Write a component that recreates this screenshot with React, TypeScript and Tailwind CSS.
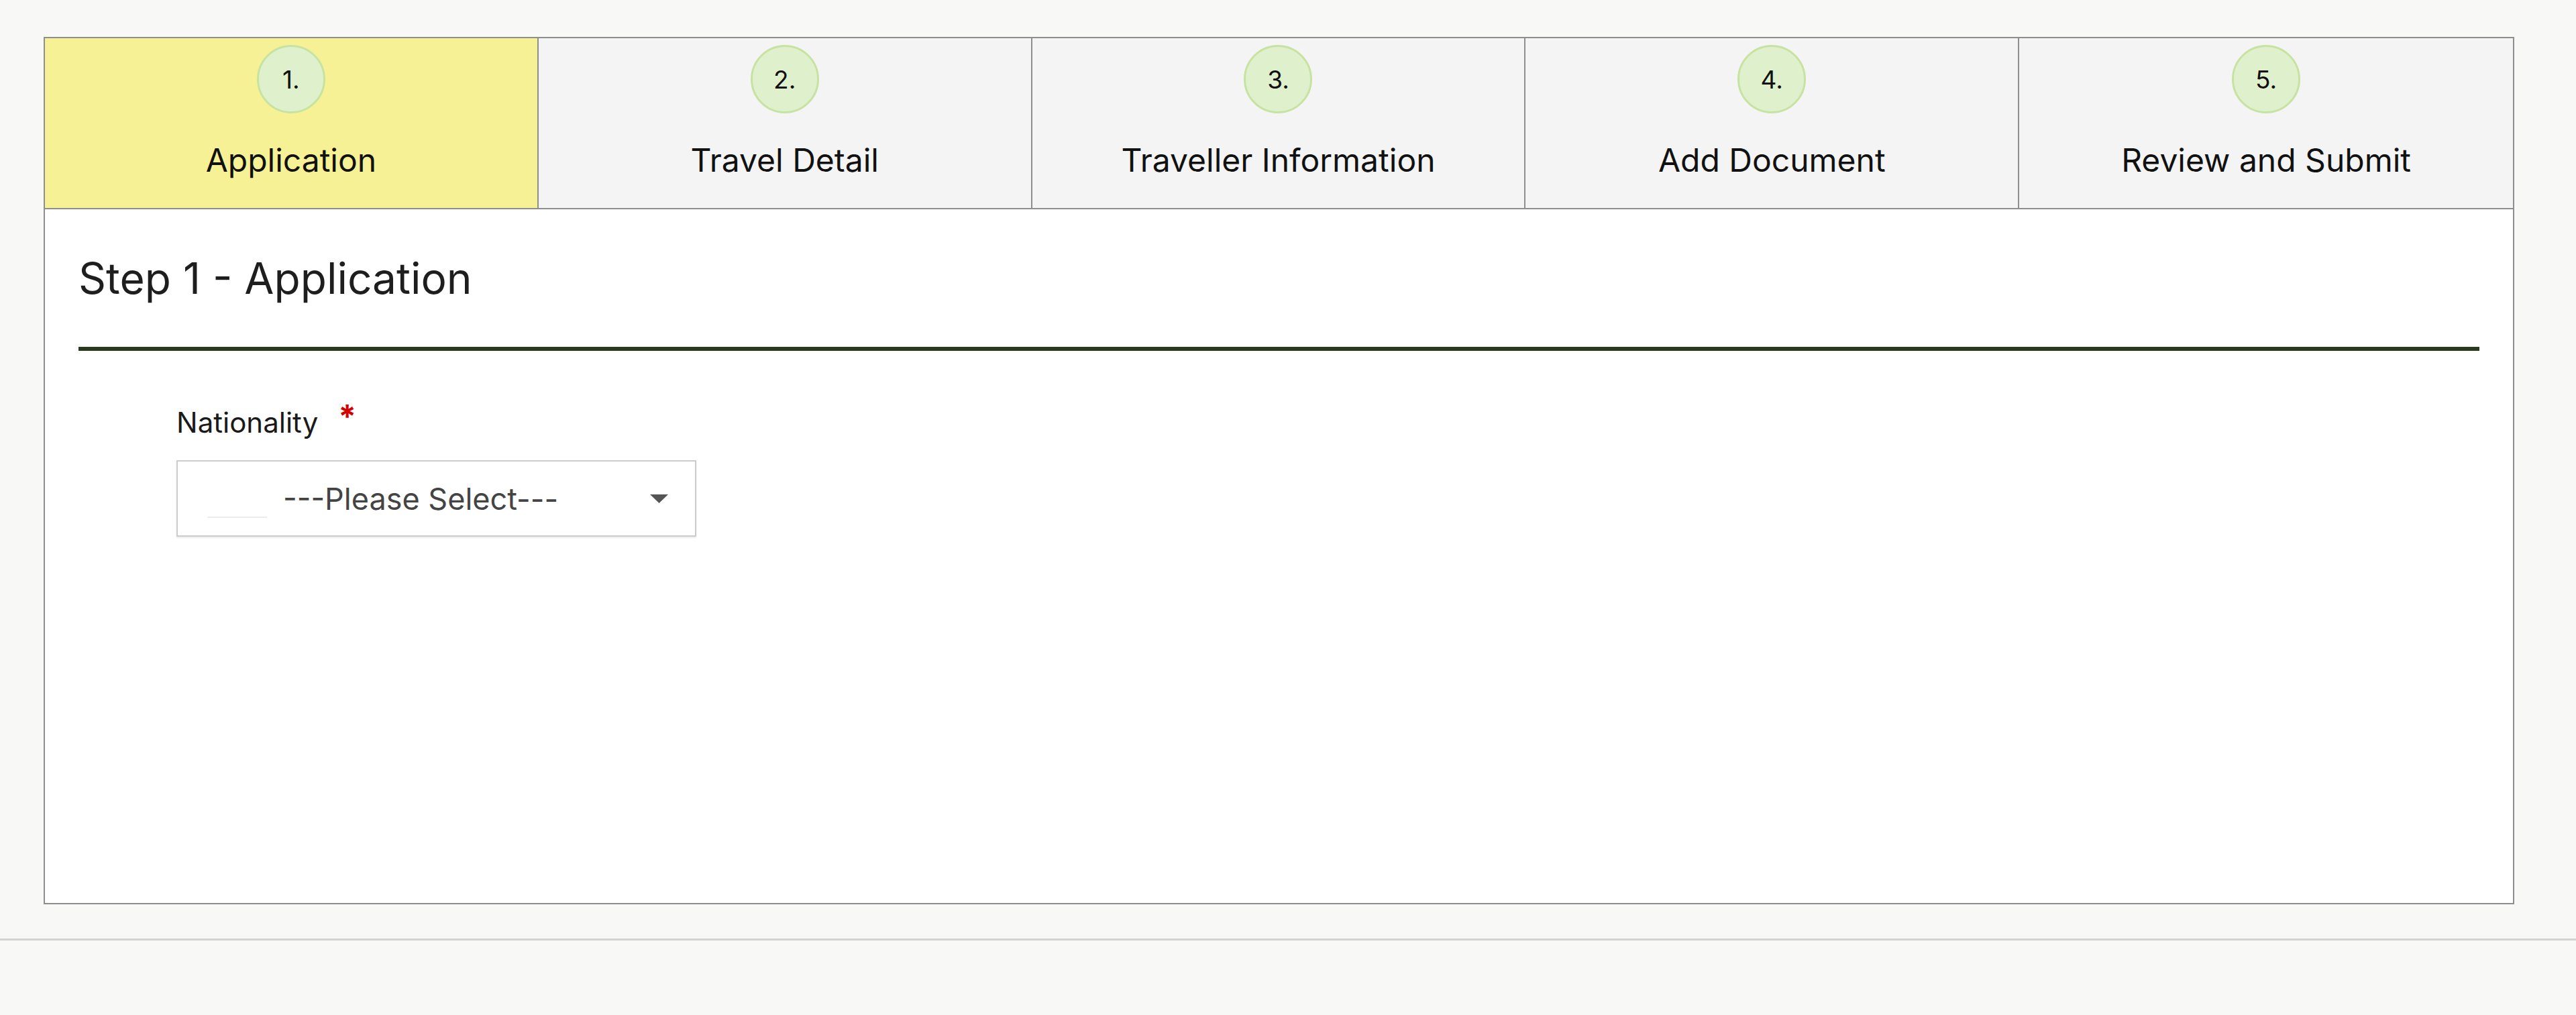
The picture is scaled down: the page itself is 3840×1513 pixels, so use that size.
import React from 'react';

const steps = [
  { num: '1.', label: 'Application' },
  { num: '2.', label: 'Travel Detail' },
  { num: '3.', label: 'Traveller Information' },
  { num: '4.', label: 'Add Document' },
  { num: '5.', label: 'Review and Submit' },
];

const App = () => {
  const active = 0;

  return (
    <div className="min-h-screen bg-[#f8f9f7] font-['Inter',sans-serif] text-[#1c1c1c]">
      <div className="pt-[55px] pl-[65px] pr-[92px]">
        <div className="border-2 border-[#8e8e8e] bg-white">
          {/* steps */}
          <div className="grid grid-cols-5 border-b-2 border-[#8e8e8e]">
            {steps.map((step, i) => (
              <div
                key={step.num}
                className={`flex h-[253px] flex-col items-center pt-[10px] ${
                  i === active ? 'bg-[#f7f196]' : 'bg-[#f3f4f3]'
                } ${i < steps.length - 1 ? 'border-r-2 border-[#8e8e8e]' : ''}`}
              >
                <div className="flex h-[102px] w-[102px] items-center justify-center rounded-full border-[3px] border-[#c6e3a2] bg-[#dff0cd] text-[37px] leading-none text-[#111]">
                  {step.num}
                </div>
                <div className="mt-[46px] text-[48px] leading-none text-[#111]">
                  {step.label}
                </div>
              </div>
            ))}
          </div>

          {/* step body */}
          <div className="h-[1034px] px-[50px]">
            <div className="flex h-[205px] items-center">
              <h1 className="text-[64px] leading-none text-[#1e1e1e]">Step 1 - Application</h1>
            </div>
            <div className="h-[6px] bg-[#2a3a1e]" />

            <div className="ml-[146px] mt-[86px]">
              <label className="flex items-start text-[42px] leading-none text-[#1a1a1a]">
                Nationality
                <span className="ml-[30px] -mt-[12px] text-[48px] font-bold leading-none text-[#d40000]">*</span>
              </label>
              <div className="mt-[35px] flex h-[114px] w-[775px] items-center border-2 border-[#cccccc] bg-white shadow-[0_2px_2px_rgba(0,0,0,0.08)]">
                <div className="ml-[44px] mt-[56px] h-[2px] w-[89px] bg-[#ececec]" />
                <span className="ml-[24px] text-[45px] leading-none text-[#444]">---Please Select---</span>
                <svg className="ml-auto mr-[40px]" width="27" height="13" viewBox="0 0 27 13">
                  <path d="M0 0h27L13.5 13z" fill="#555" />
                </svg>
              </div>
            </div>
          </div>
        </div>
      </div>

      {/* footer */}
      <div className="mt-[51px] border-t-[3px] border-[#d2d3d1]" />
    </div>
  );
};

export default App;
